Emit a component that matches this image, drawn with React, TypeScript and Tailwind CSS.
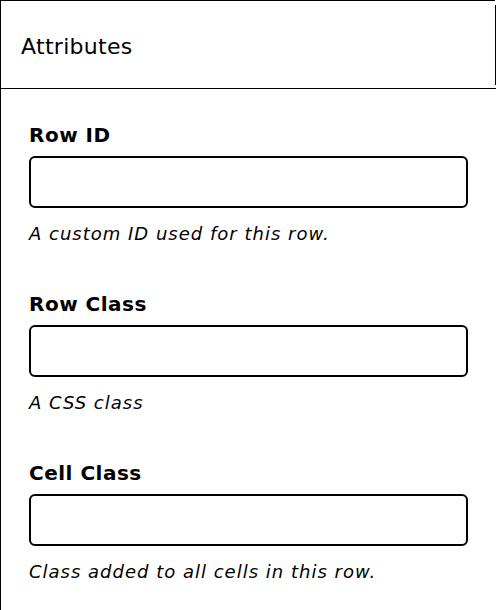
import React from 'react';

const fields = [
  { label: 'Row ID', help: 'A custom ID used for this row.' },
  { label: 'Row Class', help: 'A CSS class' },
  { label: 'Cell Class', help: 'Class added to all cells in this row.' },
];

const App = () => {
  return (
    <div className="w-[496px] h-[610px] bg-white text-black border-l border-black overflow-hidden font-['DejaVu_Sans',sans-serif]">
      <div className="flex h-[89px] border-b border-black">
        <div className="flex-1 flex items-center border-t border-black pl-5 pt-1">
          <h2 className="text-[22px] leading-7 font-normal tracking-[0.3px]">Attributes</h2>
        </div>
        <div className="w-px bg-black mt-[5px] mb-[3px]" />
      </div>

      <div className="flex flex-col gap-[42px] pt-8 pr-7 pl-7">
        {fields.map((f) => (
          <div key={f.label} className="flex flex-col">
            <label className="text-[20px] leading-7 font-bold tracking-[0.5px]">{f.label}</label>
            <input
              type="text"
              className="mt-[7px] h-[52px] w-full rounded-md border-2 border-black bg-white px-3 outline-none"
            />
            <p className="mt-3 text-[18px] leading-7 italic tracking-[1px]">{f.help}</p>
          </div>
        ))}
      </div>
    </div>
  );
};

export default App;
